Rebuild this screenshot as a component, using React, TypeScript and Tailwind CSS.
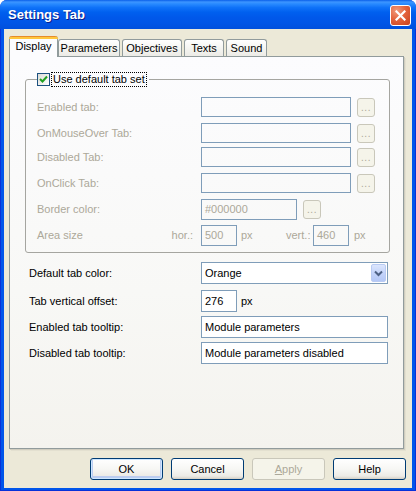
import React from "react";

const DisabledInput = ({ w, h = 20, value }: { w: number | string; h?: number; value?: string }) => (
  <div
    className={`border border-[#7F9DB9] bg-transparent text-[#ACA899] pl-[3px] flex items-center box-border`}
    style={{ width: w, height: h }}
  >
    {value}
  </div>
);

const DotsBtn = () => (
  <div className="ml-[6px] w-[18px] h-[19px] box-border border border-[#C9C7BA] rounded-[3px] bg-[#F5F4EA] flex items-end justify-center pb-[3px] text-[#ACA899] text-[10px] leading-none tracking-[0.5px]">
    ...
  </div>
);

const Tab = ({ label, w }: { label: string; w: number }) => (
  <div
    className="h-[17px] box-border border-t border-x border-[#919B9C] rounded-t-[3px] bg-[linear-gradient(180deg,#ffffff_0%,#f3f3ef_60%,#ecebe6_100%)] flex items-center justify-center pt-[1px] mr-[2px]"
    style={{ width: w }}
  >
    {label}
  </div>
);

const Btn = ({ label, def, disabled }: { label: React.ReactNode; def?: boolean; disabled?: boolean }) => (
  <div
    className={
      "w-[73px] h-[22px] box-border rounded-[3px] border flex items-center justify-center " +
      (disabled
        ? "border-[#C9C7BA] bg-[#F5F4EA] text-[#ACA899]"
        : "border-[#003C74] bg-[linear-gradient(180deg,#ffffff_0%,#f7f7f4_50%,#ecebe6_85%,#d6d0c5_100%)] text-black") +
      (def ? " shadow-[inset_0_0_0_1px_#cee7ff,inset_0_-1px_0_2px_#bccdf0]" : "")
    }
  >
    {label}
  </div>
);

const TextInput = ({ w, value }: { w: number; value: string }) => (
  <div
    className="h-[22px] box-border border border-[#7F9DB9] bg-white pl-[3px] flex items-center text-black"
    style={{ width: w }}
  >
    {value}
  </div>
);

export default function App() {
  return (
    <div className="w-[416px] h-[491px] box-border bg-[#0055EA] rounded-t-[7px] border-x border-b border-[#0831D9] flex flex-col font-['Liberation_Sans',Arial,sans-serif] text-[11px] text-black leading-none">
      {/* Title bar */}
      <div className="h-[29px] -mx-px shrink-0 rounded-t-[7px] bg-[linear-gradient(180deg,#0a5fe9_0%,#3d95ff_7%,#2a8bff_13%,#0f72f8_26%,#0060ef_42%,#0058ea_60%,#0055e6_80%,#0050dd_100%)] flex items-center pl-[8px] pr-[5px]">
        <span className="text-white font-bold text-[13px] [text-shadow:1px_1px_0_#0a1e8c]">Settings Tab</span>
        <div className="ml-auto mt-[2px] w-[21px] h-[21px] box-border border border-white rounded-[3px] bg-[radial-gradient(circle_at_30%_25%,#f09a7c_0%,#e4643d_45%,#c8401c_100%)] flex items-center justify-center">
          <svg width="11" height="11" viewBox="0 0 11 11">
            <path d="M1.5 1.5 L9.5 9.5 M9.5 1.5 L1.5 9.5" stroke="white" strokeWidth="2.2" strokeLinecap="square" />
          </svg>
        </div>
      </div>

      {/* Body */}
      <div className="flex-1 mx-[3px] mb-[2px] bg-[#ECE9D8] flex flex-col pl-[5px] pr-[8px] pt-[7px]">
        {/* Tabs */}
        <div className="h-[20px] flex items-end">
          <div className="relative z-10 -mb-px w-[49px] h-[21px] box-border border-x border-[#919B9C] rounded-t-[3px] bg-[#FCFCFE] flex flex-col">
            <div className="h-[3px] -mx-px rounded-t-[3px] bg-[linear-gradient(180deg,#e68b2c_0%,#e68b2c_33%,#ffc73c_34%,#ffc73c_100%)]" />
            <div className="flex-1 flex items-center justify-center pb-[3px]">Display</div>
          </div>
          <Tab label="Parameters" w={62} />
          <Tab label="Objectives" w={60} />
          <Tab label="Texts" w={40} />
          <Tab label="Sound" w={41} />
        </div>

        {/* Panel */}
        <div className="h-[393px] box-border border border-[#919B9C] bg-[linear-gradient(180deg,#fcfcfe_0%,#f8f8f6_60%,#f4f3ee_100%)] shadow-[1px_1px_0_#d0cdbf,2px_2px_0_#e3e0d0] flex flex-col pl-[15px]">
          <fieldset className="mt-[15px] w-[365px] box-border border border-[#A5A5A0] rounded-[3px] px-0 pl-[11px] pb-[6px] m-0">
            <legend className="ml-0 px-0 flex items-center h-[15px]">
              <div className="w-[13px] h-[13px] box-border border border-[#1C5180] bg-[linear-gradient(135deg,#dcdcd7_0%,#ffffff_100%)] flex items-center justify-center">
                <svg width="9" height="9" viewBox="0 0 9 9">
                  <path d="M1 4 L3.5 6.5 L8 1.5" stroke="#21A121" strokeWidth="2" fill="none" />
                </svg>
              </div>
              <span className="ml-[1px] h-[15px] box-border border border-dotted border-black px-[1px] flex items-center">
                Use default tab set
              </span>
              <span className="w-[2px]" />
            </legend>

            <div className="text-[#ACA899] flex flex-col">
              <div className="mt-[10px] h-[20px] flex items-center">
                <span className="w-[164px]">Enabled tab:</span>
                <DisabledInput w={150} />
                <DotsBtn />
              </div>
              <div className="mt-[6px] h-[20px] flex items-center">
                <span className="w-[164px]">OnMouseOver Tab:</span>
                <DisabledInput w={150} />
                <DotsBtn />
              </div>
              <div className="mt-[4px] h-[20px] flex items-center">
                <span className="w-[164px]">Disabled Tab:</span>
                <DisabledInput w={150} />
                <DotsBtn />
              </div>
              <div className="mt-[6px] h-[20px] flex items-center">
                <span className="w-[164px]">OnClick Tab:</span>
                <DisabledInput w={150} />
                <DotsBtn />
              </div>
              <div className="mt-[6px] h-[21px] flex items-center">
                <span className="w-[164px]">Border color:</span>
                <DisabledInput w={96} h={21} value="#000000" />
                <DotsBtn />
              </div>
              <div className="mt-[5px] h-[21px] flex items-center">
                <span className="w-[164px] flex justify-between pr-[8px]">
                  <span>Area size</span>
                  <span>hor.:</span>
                </span>
                <DisabledInput w={36} h={21} value="500" />
                <span className="w-[49px] pl-[4px]">px</span>
                <span className="w-[27px]">vert.:</span>
                <DisabledInput w={36} h={21} value="460" />
                <span className="pl-[5px]">px</span>
              </div>
            </div>
          </fieldset>

          <div className="pl-[4px] flex flex-col">
            <div className="mt-[9px] h-[22px] flex items-center">
              <span className="w-[172px]">Default tab color:</span>
              <div className="w-[187px] h-[22px] box-border border border-[#7F9DB9] bg-white flex items-center pl-[3px] pr-px">
                <span>Orange</span>
                <div className="ml-auto w-[15px] h-[18px] box-border border border-[#B9CBF3] rounded-[2px] bg-[linear-gradient(180deg,#dce6fd_0%,#c4d4fa_50%,#b4c8f6_100%)] flex items-center justify-center">
                  <svg width="9" height="7" viewBox="0 0 9 7">
                    <path d="M1 1.5 L4.5 5 L8 1.5" stroke="#4D6185" strokeWidth="2" fill="none" />
                  </svg>
                </div>
              </div>
            </div>
            <div className="mt-[6px] h-[22px] flex items-center">
              <span className="w-[172px]">Tab vertical offset:</span>
              <TextInput w={36} value="276" />
              <span className="pl-[4px]">px</span>
            </div>
            <div className="mt-[4px] h-[22px] flex items-center">
              <span className="w-[172px]">Enabled tab tooltip:</span>
              <TextInput w={187} value="Module parameters" />
            </div>
            <div className="mt-[4px] h-[22px] flex items-center">
              <span className="w-[172px]">Disabled tab tooltip:</span>
              <TextInput w={187} value="Module parameters disabled" />
            </div>
          </div>
        </div>

        {/* Buttons */}
        <div className="mt-[9px] -mr-[2px] flex justify-end gap-[8px]">
          <Btn label="OK" def />
          <Btn label="Cancel" />
          <Btn
            label={
              <span>
                <span className="underline">A</span>pply
              </span>
            }
            disabled
          />
          <Btn label="Help" />
        </div>
      </div>
    </div>
  );
}
